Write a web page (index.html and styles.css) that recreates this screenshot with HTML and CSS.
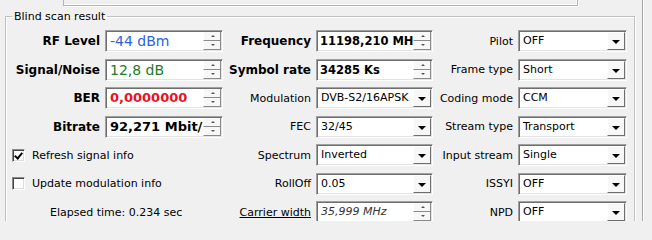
FILE: index.html
```html
<!DOCTYPE html>
<html lang="en">
<head>
    <meta charset="UTF-8">
    <title>Blind scan result</title>
    <link rel="stylesheet" href="styles.css">
</head>
<body>

    <div class="pane">
        <!-- Panel above (only its lower edge shows) -->
        <div class="top-strip">
            <div class="top-panel"></div>
        </div>

        <fieldset class="scan-result">
            <legend>Blind scan result</legend>
            <div class="grid">
                <!-- Row 1 -->
                <label class="lbl big">RF Level</label>
                <div class="field">
                    <span class="value val-big rf">-44 dBm</span>
                    <span class="spin"><span class="up"></span><span class="down"></span></span>
                </div>
                <label class="lbl big">Frequency</label>
                <div class="field">
                    <span class="value val-mid">11198,210 MH</span>
                    <span class="spin"><span class="up"></span><span class="down"></span></span>
                </div>
                <label class="lbl">Pilot</label>
                <div class="field combo"><span class="value">OFF</span><span class="drop"></span></div>

                <!-- Row 2 -->
                <label class="lbl big">Signal/Noise</label>
                <div class="field">
                    <span class="value val-big snr">12,8 dB</span>
                    <span class="spin"><span class="up"></span><span class="down"></span></span>
                </div>
                <label class="lbl big">Symbol rate</label>
                <div class="field">
                    <span class="value val-mid">34285 Ks</span>
                    <span class="spin"><span class="up"></span><span class="down"></span></span>
                </div>
                <label class="lbl">Frame type</label>
                <div class="field combo"><span class="value">Short</span><span class="drop"></span></div>

                <!-- Row 3 -->
                <label class="lbl big">BER</label>
                <div class="field">
                    <span class="value val-big ber">0,0000000</span>
                    <span class="spin"><span class="up"></span><span class="down"></span></span>
                </div>
                <label class="lbl">Modulation</label>
                <div class="field combo"><span class="value">DVB-S2/16APSK</span><span class="drop"></span></div>
                <label class="lbl">Coding mode</label>
                <div class="field combo"><span class="value">CCM</span><span class="drop"></span></div>

                <!-- Row 4 -->
                <label class="lbl big">Bitrate</label>
                <div class="field">
                    <span class="value val-big">92,271 Mbit/</span>
                    <span class="spin"><span class="up"></span><span class="down"></span></span>
                </div>
                <label class="lbl">FEC</label>
                <div class="field combo"><span class="value">32/45</span><span class="drop"></span></div>
                <label class="lbl">Stream type</label>
                <div class="field combo"><span class="value">Transport</span><span class="drop"></span></div>

                <!-- Row 5 -->
                <label class="check"><span class="box checked"></span>Refresh signal info</label>
                <label class="lbl">Spectrum</label>
                <div class="field combo"><span class="value">Inverted</span><span class="drop"></span></div>
                <label class="lbl">Input stream</label>
                <div class="field combo"><span class="value">Single</span><span class="drop"></span></div>

                <!-- Row 6 -->
                <label class="check"><span class="box"></span>Update modulation info</label>
                <label class="lbl">RollOff</label>
                <div class="field combo"><span class="value">0.05</span><span class="drop"></span></div>
                <label class="lbl">ISSYI</label>
                <div class="field combo"><span class="value">OFF</span><span class="drop"></span></div>

                <!-- Row 7 -->
                <div class="elapsed">Elapsed time: 0.234 sec</div>
                <label class="lbl link">Carrier width</label>
                <div class="field">
                    <span class="value italic">35,999 MHz</span>
                    <span class="spin"><span class="up"></span><span class="down"></span></span>
                </div>
                <label class="lbl">NPD</label>
                <div class="field combo"><span class="value">OFF</span><span class="drop"></span></div>
            </div>
        </fieldset>
    </div>

</body>
</html>
```

FILE: styles.css
```css
/* Reset default margin/padding */
* {
    margin: 0;
    padding: 0;
    box-sizing: border-box;
}

body {
    font-family: "DejaVu Sans", Tahoma, sans-serif;
    font-size: 11px;
    color: #000;
    background-color: #f0f0f0;
    width: 652px;
    height: 240px;
    overflow: hidden;
}

/* Scrolled pane, clipped at the bottom */
.pane {
    width: 643px;
    height: 221px;
    overflow: hidden;
    border-right: 1px solid #a8a8a8;
    box-shadow: 1px 0 0 #fff;
}

.top-strip {
    height: 6px;
    padding-left: 63px;
}

.top-panel {
    width: 515px;
    height: 6px;
    border: 1px solid #b4b4b4;
    border-top: none;
    box-shadow: inset -1px -1px 0 #fff, 1px 1px 0 #fff;
}

/* Group box */
.scan-result {
    margin: 4px 0 0 5px;
    width: 630px;
    height: 260px;
    border: 1px solid #c0c0c0;
    box-shadow: inset 1px 1px 0 #fff, 1px 1px 0 #fff;
    padding: 0;
}

.scan-result legend {
    margin-left: 6px;
    padding: 0 2px;
    line-height: 13px;
}

.grid {
    display: grid;
    grid-template-columns: 99px 118px 93px 117px 85px 109px;
    grid-auto-rows: 22px;
    row-gap: 6.5px;
    padding-top: 7px;
    align-items: center;
}

.lbl {
    text-align: right;
    padding-right: 5px;
    white-space: nowrap;
}

.lbl.big {
    font-weight: bold;
    font-size: 12px;
}

.lbl.link {
    text-decoration: underline;
}

/* Sunken edit / combo box */
.field {
    height: 22px;
    display: flex;
    background: #fff;
    border: 1px solid;
    border-color: #a0a0a0 #fff #fff #a0a0a0;
    box-shadow: inset 1px 1px 0 #6e6e6e, inset -1px -1px 0 #e3e3e3;
    padding: 1px;
    overflow: hidden;
}

.value {
    flex: 1;
    padding-left: 3px;
    line-height: 18px;
    white-space: nowrap;
}

.val-big {
    font-size: 13px;
    font-weight: bold;
}

.val-mid {
    font-size: 11.5px;
    font-weight: bold;
    padding-left: 2px;
}

.rf {
    color: #2e63d8;
    font-weight: normal;
    font-size: 14px;
}

.snr {
    color: #237a25;
    font-weight: normal;
    font-size: 14px;
}

.ber {
    color: #e8131f;
}

.italic {
    font-style: italic;
    color: #333;
}

/* Up/down buttons */
.spin {
    width: 18px;
    display: flex;
    flex-direction: column;
    flex-shrink: 0;
}

.spin span {
    flex: 1;
    position: relative;
    background: #f7f7f7;
    border-right: 1px solid #8a8a8a;
    border-bottom: 1px solid #8a8a8a;
    border-left: 1px solid #fff;
}

.spin .up::after,
.spin .down::after {
    content: '';
    position: absolute;
    left: 7px;
    top: 3px;
    border-left: 2px solid transparent;
    border-right: 2px solid transparent;
}

.spin .up::after {
    border-bottom: 2px solid #555;
}

.spin .down::after {
    border-top: 2px solid #555;
}

/* Drop-down button */
.drop {
    width: 18px;
    flex-shrink: 0;
    position: relative;
    background: #f7f7f7;
    border-right: 1px solid #6e6e6e;
    border-bottom: 1px solid #6e6e6e;
    border-left: 1px solid #fff;
    border-top: 1px solid #fff;
}

.drop::after {
    content: '';
    position: absolute;
    left: 4px;
    top: 7px;
    border-left: 4px solid transparent;
    border-right: 4px solid transparent;
    border-top: 4px solid #000;
}

/* Check boxes */
.check {
    grid-column: 1 / 3;
    display: flex;
    align-items: center;
    padding-left: 6px;
}

.box {
    width: 13px;
    height: 13px;
    margin-right: 7px;
    background: #fff;
    border: 1px solid;
    border-color: #8a8a8a #fff #fff #8a8a8a;
    box-shadow: inset 1px 1px 0 #444, inset -1px -1px 0 #ddd;
    position: relative;
}

.box.checked::after {
    content: '';
    position: absolute;
    left: 3px;
    top: 1px;
    width: 3px;
    height: 6px;
    border-right: 2px solid #000;
    border-bottom: 2px solid #000;
    transform: rotate(40deg);
}

.elapsed {
    grid-column: 1 / 3;
    padding-left: 44px;
}
```
